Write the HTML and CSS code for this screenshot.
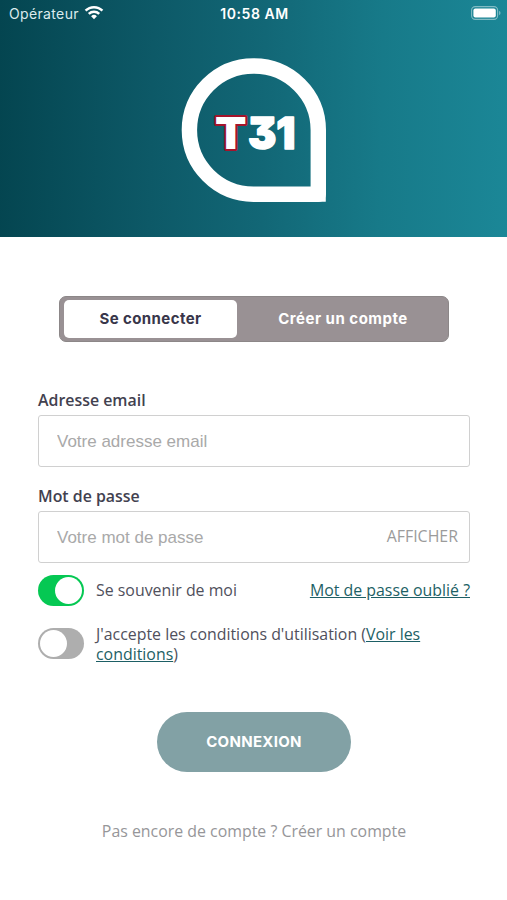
FILE: index.html
```html
<!DOCTYPE html>
<html lang="fr">
<head>
<meta charset="utf-8">
<meta name="viewport" content="width=device-width, initial-scale=1">
<title>Connexion</title>
<link rel="stylesheet" href="styles.css">
</head>
<body>
<header class="hero">
  <div class="status">
    <div class="carrier"><span class="carrier-name">Opérateur</span>
      <svg class="wifi" width="20" height="15" viewBox="0 0 20 15" fill="none" stroke="#fff" stroke-width="2.5"><path d="M1.6 5.6a11.9 11.9 0 0 1 16.8 0"/><path d="M4.8 8.800a7.400 7.400 0 0 1 10.400 0"/><path d="M10 14.200l-2.900-2.900a4.100 4.100 0 0 1 5.800 0z" fill="#fff" stroke="none"/></svg>
    </div>
    <span class="time">10:58 AM</span>
    <svg class="battery" width="30" height="15" viewBox="0 0 30 15"><rect x=".6" y=".6" width="26" height="12.8" rx="3.6" fill="none" stroke="#fff" stroke-opacity=".45" stroke-width="1.1"/><rect x="2.4" y="2.4" width="22.4" height="9.2" rx="2" fill="#fff"/><path d="M28.100 4.800c1.900.8 1.900 3.600 0 4.400z" fill="#fff" fill-opacity=".45"/></svg>
  </div>
  <svg class="logo" width="146" height="146" viewBox="0 0 146 146">
    <path d="M73 9H72.500A64 64 0 0 0 72.500 137.200H137.300V73A64.300 64.300 0 0 0 73 9Z" fill="none" stroke="#fff" stroke-width="15.400" stroke-linejoin="round"/>
    <path d="M130 137h14.800v7.200q0 .5-.5.5H130z" fill="#fff"/>
    <text class="logo-t" x="34" y="92" textLength="31.500" lengthAdjust="spacingAndGlyphs">T</text>
    <text class="logo-n" x="67" y="92.300" textLength="47.500" lengthAdjust="spacingAndGlyphs">31</text>
  </svg>
</header>
<main class="content">
  <nav class="tabs">
    <button class="tab tab-active"><span class="tab-login">Se connecter</span></button>
    <button class="tab"><span class="tab-signup">Créer un compte</span></button>
  </nav>
  <form class="form">
    <label class="label label-email" for="email">Adresse email</label>
    <div class="field"><input class="input" id="email" type="email" placeholder="Votre adresse email"></div>
    <label class="label label-password" for="password">Mot de passe</label>
    <div class="field"><input class="input" id="password" type="password" placeholder="Votre mot de passe"><span class="show">AFFICHER</span></div>
    <div class="option remember"><span class="switch switch-on"></span><span class="option-text">Se souvenir de moi</span><a class="link forgot">Mot de passe oublié ?</a></div>
    <div class="option terms"><span class="switch"></span><span class="terms-text">J'accepte les conditions d'utilisation (<a class="link">Voir les<br>conditions</a>)</span></div>
    <button class="submit" type="button"><span class="submit-text">CONNEXION</span></button>
  </form>
  <p class="signup">Pas encore de compte ? Créer un compte</p>
</main>
</body>
</html>
```
FILE: styles.css
```css
* { box-sizing: border-box; }
body { margin: 0; background: #fff; color: #50505c; font-family: "Open Sans", "Noto Sans", sans-serif; font-size: 15.900px; }
button { border: 0; padding: 0; background: none; }
.hero { height: 237px; background: linear-gradient(91deg, #044550 0%, #0d5967 30%, #126776 52%, #177a89 75%, #1b8797 100%); display: flex; flex-direction: column; align-items: center; }
.status { width: 100%; height: 28px; padding: 0 6px 2px 9px; display: grid; grid-template-columns: 1fr auto 1fr; align-items: center; color: #fff; font-family: Inter, sans-serif; font-size: 14px; }
.carrier { display: flex; align-items: center; gap: 5px; color: #dcebed; letter-spacing: .35px; }
.wifi { margin-top: -1px; }
.time { font-weight: 600; font-size: 14px; letter-spacing: .55px; margin: 0 0 0 -1px; }
.battery { justify-self: end; }
.logo { display: block; margin-top: 29px; }
.logo-t, .logo-n { font-family: Inter, sans-serif; font-weight: 900; font-size: 44px; fill: #fff; }
.logo-t { stroke: #a5142b; stroke-width: 4px; stroke-linejoin: round; paint-order: stroke; }
.logo-n { font-feature-settings: "cv09"; stroke: #fff; stroke-width: 1.500px; stroke-linejoin: round; }
.content { padding: 59px 37px 0 38px; display: flex; flex-direction: column; }
.tabs { align-self: center; width: 390px; height: 46px; padding: 3px 4px 3px 4px; border: 1px solid #8c8788; border-radius: 7px; background: #999194; display: grid; grid-template-columns: 173px 1fr; }
.tab { border-radius: 5px; color: #fff; font-family: Inter, sans-serif; font-weight: 700; font-size: 15px; padding-bottom: 2px; }
.tab-active { background: #fff; color: #38364a; }
.tab-login { letter-spacing: .4px; }
.tab-signup { letter-spacing: .5px; padding-left: 5px; }
.form { display: flex; flex-direction: column; }
.label { font-weight: 600; color: #42414f; line-height: 22px; }
.label-email { margin-top: 47px; }
.label-password { margin-top: 18px; }
.field { height: 52px; margin-top: 4px; border: 1.500px solid #d0d0d0; border-radius: 3px; display: flex; align-items: center; padding: 0 11px 0 18px; }
.input { flex: 1; min-width: 0; border: 0; padding: 2px 0 0; outline: 0; background: none; font-family: "Liberation Sans", sans-serif; font-size: 17px; }
.input::placeholder { color: #a9a9a9; opacity: 1; }
.show { color: #9b9b9b; padding-bottom: 2px; }
.option { display: flex; align-items: center; gap: 12px; }
.remember { margin-top: 12px; }
.option-text, .forgot { padding-bottom: 1px; }
.terms { margin-top: 17px; line-height: 20px; font-size: 15.900px; }
.terms-text { padding-top: 1px; }
.forgot { margin-left: auto; }
.link { color: #1d5f65; text-decoration: underline; }
.switch { flex: none; width: 46px; height: 31px; border-radius: 16px; background: #aeaeae; padding: 2px; display: flex; }
.terms .switch { margin-top: -1px; }
.switch::before { content: ""; width: 27px; height: 27px; border-radius: 50%; background: #fff; }
.switch-on { background: #05c853; justify-content: flex-end; }
.submit { align-self: center; width: 194px; height: 60px; margin-top: 48px; padding-bottom: 2px; border-radius: 30px; background: #82a1a5; color: #fff; font-family: Inter, sans-serif; font-weight: 700; font-size: 15px; }
.submit-text { letter-spacing: .3px; }
.signup { margin: 48px 0 0; text-align: center; color: #969699; line-height: 22px; }
```
